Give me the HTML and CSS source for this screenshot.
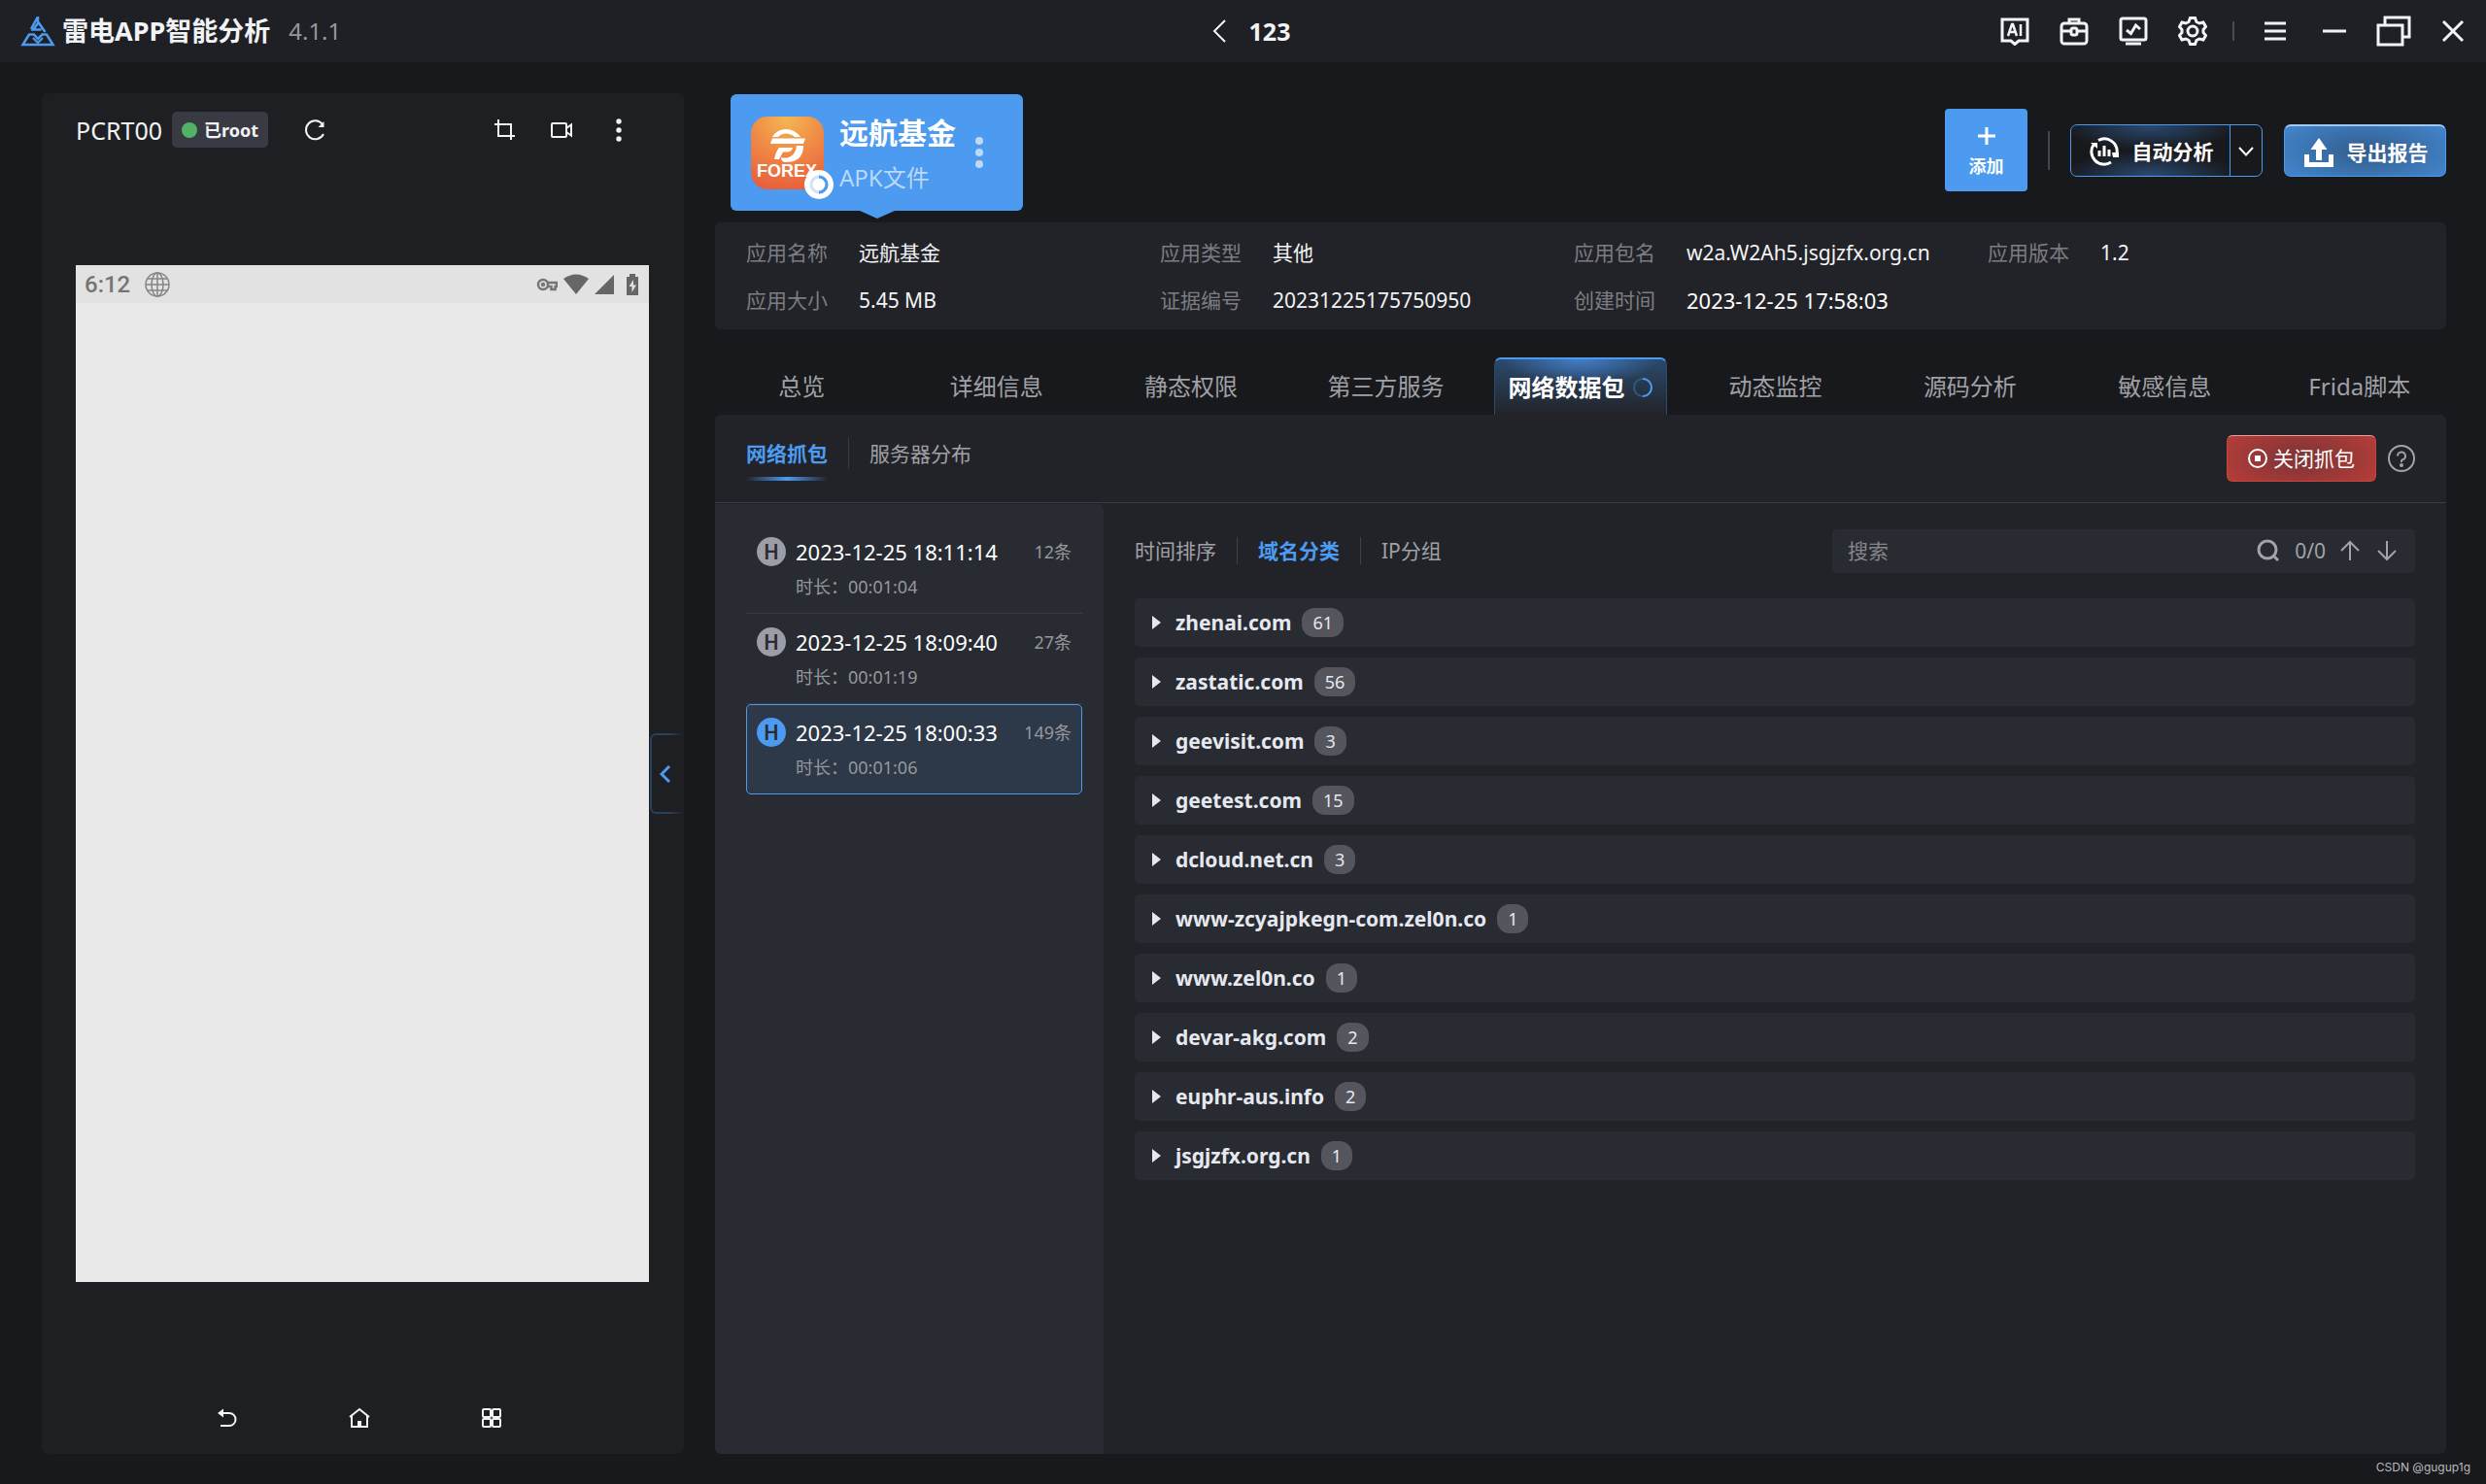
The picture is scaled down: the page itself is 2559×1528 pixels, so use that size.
FILE: index.html
```html
<!DOCTYPE html>
<html lang="zh-CN">
<head>
<meta charset="utf-8">
<meta name="viewport" content="width=device-width, initial-scale=1">
<title>雷电APP智能分析</title>
<link rel="stylesheet" href="styles.css">
</head>
<body>
<header class="titlebar">
  <div class="brand">
    <svg class="brand-logo" viewBox="0 0 36 32" fill="none" stroke="#4c9bf0"><path d="M18 1V8L13 14.500H21.500M18.500 7L25.500 17" stroke-width="2.500"/><path d="M17.500 2L11 14" stroke-width="2.500"/><path d="M9 19.500L2.500 30H33.500L27 19.500H22.500L18 24L14 19.500Z" stroke-width="2.500"/><path d="M13 23L18 28L23 23" stroke-width="2"/></svg>
    <h1 class="brand-name">雷电APP智能分析</h1>
    <span class="version">4.1.1</span>
  </div>
  <div class="case">
    <button class="icon-btn case-back" aria-label="返回"><svg width="14" height="24" viewBox="0 0 14 24"><path d="M13 1L2 12L13 23"/></svg></button>
    <strong class="case-name">123</strong>
  </div>
  <div class="tools">
    <button class="icon-btn tool" aria-label="AI"><svg width="30" height="30" viewBox="0 0 30 30"><path d="M2 3H28V25H19L15 28.500L11 25H2Z"/><path d="M8 20L12 8H13L17 20M9.500 16H15.500M21 8V20" stroke-width="2.500"/></svg></button>
    <button class="icon-btn tool" aria-label="工具箱"><svg width="30" height="30" viewBox="0 0 30 30"><rect x="2" y="7" width="26" height="21" rx="3"/><path d="M10 7V3H20V7M2 15H12M18 15H28"/><rect x="12" y="12" width="6" height="7" rx="2"/></svg></button>
    <button class="icon-btn tool" aria-label="检测"><svg width="30" height="30" viewBox="0 0 30 30"><rect x="2" y="2" width="26" height="22" rx="2"/><path d="M8 14L12.500 17.500L17.500 9L22 13M7 28H23"/></svg></button>
    <button class="icon-btn tool" aria-label="设置"><svg width="30" height="30" viewBox="0 0 30 30"><path d="M12.500 1.500H17.500L19 5.500L22 7L26 6L28.500 10.500L26 13.500V16.500L28.500 19.500L26 24L22 23L19 24.500L17.500 28.500H12.500L11 24.500L8 23L4 24L1.500 19.500L4 16.500V13.500L1.500 10.500L4 6L8 7L11 5.500Z"/><circle cx="15" cy="15" r="5"/></svg></button>
    <span class="tool-divider"></span>
    <button class="icon-btn tool" aria-label="菜单"><svg width="30" height="30" viewBox="0 0 30 30"><path d="M4 7H26M4 15H26M4 23H26"/></svg></button>
    <button class="icon-btn tool" aria-label="最小化"><svg width="30" height="30" viewBox="0 0 30 30"><path d="M3 15H27" stroke-width="3"/></svg></button>
    <button class="icon-btn tool" aria-label="还原"><svg width="36" height="32" viewBox="0 0 36 32"><path d="M9 10V2H34V22H27M2 10H27V30H2Z"/></svg></button>
    <button class="icon-btn tool" aria-label="关闭"><svg width="30" height="30" viewBox="0 0 30 30"><path d="M5 5L25 25M25 5L5 25" stroke-width="3"/></svg></button>
  </div>
</header>

<main class="workspace">
  <section class="device">
    <div class="device-bar">
      <span class="device-name">PCRT00</span>
      <span class="root-badge"><i class="root-dot"></i>已root</span>
      <button class="icon-btn device-reload" aria-label="刷新"><svg width="24" height="24" viewBox="0 0 24 24"><path d="M20 6A9.500 9.500 0 1 0 21 16"/><path d="M21.500 3V9H15.500Z" fill="#f2f3f5" stroke="none"/></svg></button>
      <div class="device-actions">
        <button class="icon-btn" aria-label="截屏"><svg width="24" height="24" viewBox="0 0 24 24"><path d="M6 1V18H23M2 6H19V22"/></svg></button>
        <button class="icon-btn" aria-label="录屏"><svg width="24" height="24" viewBox="0 0 24 24"><rect x="2" y="5" width="15" height="14" rx="1"/><path d="M17 10L22 6.500V17.500L17 14"/></svg></button>
        <button class="icon-btn" aria-label="更多"><svg width="24" height="24" viewBox="0 0 24 24" class="solid"><circle cx="12" cy="3" r="2.700"/><circle cx="12" cy="12" r="2.700"/><circle cx="12" cy="21" r="2.700"/></svg></button>
      </div>
    </div>
    <div class="stage">
      <div class="phone">
        <div class="phone-status">
          <span class="phone-time">6:12</span>
          <svg width="26" height="26" viewBox="0 0 26 26" fill="none" stroke="#858585" stroke-width="1.500"><circle cx="13" cy="13" r="12"/><ellipse cx="13" cy="13" rx="6" ry="12"/><path d="M13 1V25M1 13H25M3 7H23M3 19H23"/></svg>
          <span class="phone-icons">
            <svg width="22" height="16" viewBox="0 0 22 16" fill="none" stroke="#757575" stroke-width="2.500"><circle cx="7" cy="8" r="5"/><circle cx="7" cy="8" r="1"/><path d="M12 6H21V10H19.500V13H15.500V10H12"/></svg>
            <svg width="26" height="22" viewBox="0 0 26 22" fill="#666"><path d="M0 5Q13-4 26 5L13 21Z"/></svg>
            <svg width="20" height="20" viewBox="0 0 20 20" fill="#666"><path d="M20 0V20H0Z"/></svg>
            <svg class="phone-battery" width="14" height="22" viewBox="0 0 14 22"><path fill="#666" d="M4 0H10V3H13V22H1V3H4Z"/><path fill="#e2e2e2" d="M8 6L3.500 13H6.500V19L11 11.500H8Z"/></svg>
          </span>
        </div>
      </div>
    </div>
    <nav class="phone-nav" aria-label="设备导航">
      <button class="icon-btn" aria-label="返回键"><svg width="24" height="24" viewBox="0 0 24 24"><path d="M4 7H14A6.500 6.500 0 0 1 14 20H5"/><path d="M2 7L8 2.500V11.500Z" fill="#f2f3f5" stroke="none"/></svg></button>
      <button class="icon-btn" aria-label="主页键"><svg width="24" height="24" viewBox="0 0 24 24"><path d="M2 11L12 3L22 11M4 10V21H20V10M11 21V16H13V21"/></svg></button>
      <button class="icon-btn" aria-label="任务键"><svg width="24" height="24" viewBox="0 0 24 24"><rect x="3" y="3" width="8" height="8" rx="1"/><rect x="13" y="3" width="8" height="8" rx="1"/><rect x="3" y="13" width="8" height="8" rx="1"/><rect x="13" y="13" width="8" height="8" rx="1"/></svg></button>
    </nav>
    <button class="drawer-handle" aria-label="收起"><svg width="12" height="18" viewBox="0 0 12 18" fill="none" stroke="#4c9bf0" stroke-width="3"><path d="M10 1L2 9L10 17"/></svg></button>
  </section>

  <section class="analysis">
    <div class="top-row">
      <article class="app-card">
        <div class="app-icon">
          <svg width="75" height="75" viewBox="0 0 75 75"><defs><radialGradient id="forex" cx=".5" cy="0" r="1"><stop offset="0" stop-color="#f4b852"/><stop offset=".55" stop-color="#ef8645"/><stop offset="1" stop-color="#e9613b"/></radialGradient></defs><rect width="75" height="75" rx="17" fill="url(#forex)"/><path fill="#fff" d="M22 21Q27 13 36 13T51 21H45Q41 17.500 36 17.500T28 21ZM22 22.500H56L54 28H20ZM29 32H43Q42 36 38 36.500H33L29 44H24Q26 35 29 32ZM47 30H54Q54 47 36 47Q31 47 31 42Q36 44 41 41Q46 38 47 30Z"/><text x="6" y="62" fill="#fff" class="icon-word">FOREX</text></svg>
          <svg class="app-busy" width="30" height="30" viewBox="0 0 30 30" fill="none"><circle cx="15" cy="15" r="15" fill="#fff"/><circle cx="15" cy="15" r="8" stroke="#cfe3fb" stroke-width="3"/><path d="M15 7A8 8 0 0 1 15 23" stroke="#4c9bf0" stroke-width="3"/></svg>
        </div>
        <div class="app-text">
          <h2 class="app-name">远航基金</h2>
          <span class="app-kind">APK文件</span>
        </div>
        <button class="icon-btn app-more" aria-label="更多操作"><svg width="8" height="32" viewBox="0 0 8 32" class="solid"><circle cx="4" cy="4" r="4"/><circle cx="4" cy="16" r="4"/><circle cx="4" cy="28" r="4"/></svg></button>
      </article>
      <div class="actions">
        <button class="add-btn"><svg width="20" height="20" viewBox="0 0 20 20" fill="none" stroke="#fff" stroke-width="3"><path d="M10 1V19M1 10H19"/></svg>添加</button>
        <span class="action-divider"></span>
        <div class="split">
          <button class="auto-btn"><svg width="30" height="30" viewBox="0 0 30 30" fill="none" stroke="#fff" stroke-width="3"><path d="M9 3.500A13 13 0 0 1 28 17M22 26A13 13 0 0 1 4 8"/><path d="M1 6H8V12ZM23 16H30V21H24Z" fill="#fff" stroke="none"/><path d="M10 14V20M15 9V20M20 13V20"/></svg>自动分析</button>
          <button class="split-more" aria-label="更多分析方式"><svg width="16" height="10" viewBox="0 0 16 10" fill="none" stroke="#fff" stroke-width="2"><path d="M1 1L8 8.500L15 1"/></svg></button>
        </div>
        <button class="export-btn"><svg width="30" height="30" viewBox="0 0 30 30" fill="#fff"><path d="M15 0L23.500 12H18V23H12V12H6.500ZM0 17H5V25H25V17H30V30H0Z"/></svg>导出报告</button>
      </div>
    </div>

    <dl class="info">
      <div class="info-item"><dt>应用名称</dt><dd>远航基金</dd></div>
      <div class="info-item"><dt>应用类型</dt><dd>其他</dd></div>
      <div class="info-item"><dt>应用包名</dt><dd>w2a.W2Ah5.jsgjzfx.org.cn</dd></div>
      <div class="info-item"><dt>应用版本</dt><dd>1.2</dd></div>
      <div class="info-item"><dt>应用大小</dt><dd>5.45 MB</dd></div>
      <div class="info-item"><dt>证据编号</dt><dd>20231225175750950</dd></div>
      <div class="info-item"><dt>创建时间</dt><dd class="timestamp">2023-12-25 17:58:03</dd></div>
    </dl>

    <nav class="tabs">
      <button class="tab">总览</button>
      <button class="tab">详细信息</button>
      <button class="tab">静态权限</button>
      <button class="tab">第三方服务</button>
      <button class="tab tab-active">网络数据包<svg width="20" height="20" viewBox="0 0 20 20" fill="none" stroke-width="2"><circle cx="10" cy="10" r="9" stroke="#31577f"/><path d="M10 1A9 9 0 0 1 10 19" stroke="#4c9bf0"/></svg></button>
      <button class="tab">动态监控</button>
      <button class="tab">源码分析</button>
      <button class="tab">敏感信息</button>
      <button class="tab">Frida脚本</button>
    </nav>

    <div class="content">
      <div class="subbar">
        <div class="subtabs">
          <button class="subtab subtab-active">网络抓包</button>
          <span class="sub-divider"></span>
          <button class="subtab">服务器分布</button>
        </div>
        <button class="stop-btn"><svg width="20" height="20" viewBox="0 0 20 20" fill="none" stroke="#fff" stroke-width="2"><circle cx="10" cy="10" r="9"/><rect x="7" y="7" width="6" height="6" fill="#fff" stroke="none"/></svg>关闭抓包</button>
        <button class="icon-btn" aria-label="帮助"><svg width="28" height="28" viewBox="0 0 28 28" class="muted"><circle cx="14" cy="14" r="13"/><path d="M10 11.500A4 4 0 1 1 14.500 15.500Q14 16 14 18"/><circle cx="14" cy="21" r="1"/></svg></button>
      </div>
      <div class="split-pane">
        <ul class="captures">
          <li><button class="capture"><span class="proto">H</span><span class="timestamp">2023-12-25 18:11:14</span><span class="cap-count">12条</span><span class="cap-length">时长：00:01:04</span></button></li>
          <li><button class="capture"><span class="proto">H</span><span class="timestamp">2023-12-25 18:09:40</span><span class="cap-count">27条</span><span class="cap-length">时长：00:01:19</span></button></li>
          <li><button class="capture capture-active"><span class="proto">H</span><span class="timestamp">2023-12-25 18:00:33</span><span class="cap-count">149条</span><span class="cap-length">时长：00:01:06</span></button></li>
        </ul>
        <div class="packets">
          <div class="filters">
            <button class="filter">时间排序</button>
            <span class="filter-divider"></span>
            <button class="filter filter-active">域名分类</button>
            <span class="filter-divider"></span>
            <button class="filter">IP分组</button>
            <div class="search">
              <input class="search-input" type="text" placeholder="搜索" aria-label="搜索">
              <button class="icon-btn" aria-label="查找"><svg width="24" height="24" viewBox="0 0 24 24" class="muted thick"><circle cx="11" cy="11" r="9"/><path d="M17 17L22 22"/></svg></button>
              <span class="search-count">0/0</span>
              <button class="icon-btn" aria-label="上一个"><svg width="20" height="22" viewBox="0 0 20 22" class="muted"><path d="M10 21V2M1 11L10 2L19 11"/></svg></button>
              <button class="icon-btn search-next" aria-label="下一个"><svg width="20" height="22" viewBox="0 0 20 22" class="muted"><path d="M10 1V20M1 11L10 20L19 11"/></svg></button>
            </div>
          </div>
          <ul class="domains">
            <li><button class="domain">zhenai.com<span class="count">61</span></button></li>
            <li><button class="domain">zastatic.com<span class="count">56</span></button></li>
            <li><button class="domain">geevisit.com<span class="count">3</span></button></li>
            <li><button class="domain">geetest.com<span class="count">15</span></button></li>
            <li><button class="domain">dcloud.net.cn<span class="count">3</span></button></li>
            <li><button class="domain">www-zcyajpkegn-com.zel0n.co<span class="count">1</span></button></li>
            <li><button class="domain">www.zel0n.co<span class="count">1</span></button></li>
            <li><button class="domain">devar-akg.com<span class="count">2</span></button></li>
            <li><button class="domain">euphr-aus.info<span class="count">2</span></button></li>
            <li><button class="domain">jsgjzfx.org.cn<span class="count">1</span></button></li>
          </ul>
        </div>
      </div>
    </div>
  </section>
</main>
<footer class="watermark">CSDN @gugup1g</footer>
</body>
</html>
```
FILE: styles.css
```css
:root {
  --blue: #4c9bf0;
  --text: #f2f3f5;
  --muted: #96979c;
  --panel: #222328;
  --raised: #282b32;
}

* { box-sizing: border-box; }

body {
  margin: 0;
  min-height: 100vh;
  display: flex;
  flex-direction: column;
  background: #18191d;
  color: var(--text);
  font: 21px/30px "Noto Sans", "Noto Sans CJK SC", sans-serif;
}

h1, h2, dl, dd, ul { margin: 0; padding: 0; }
ul { list-style: none; }

button {
  margin: 0;
  padding: 0;
  border: 0;
  background: none;
  color: inherit;
  font: inherit;
  cursor: pointer;
}

svg { display: block; flex: none; }

.icon-btn { display: flex; flex: none; align-items: center; justify-content: center; }
.icon-btn svg { fill: none; stroke: var(--text); stroke-width: 2; }
.icon-btn svg.solid { fill: var(--text); stroke: none; }
.icon-btn svg.muted { stroke: #a2a3a7; }
.icon-btn svg.thick { stroke-width: 3; }

.timestamp { color: #fff; font-size: 22px; }

/* Title bar */
.titlebar {
  display: grid;
  grid-template-columns: 1fr auto 1fr;
  align-items: center;
  height: 64px;
  padding: 0 14px 0 21px;
  background: #1f2025;
}
.brand { display: flex; align-items: center; gap: 7px; }
.brand-logo { width: 36px; height: 32px; }
.brand-name { font-size: 27px; line-height: 40px; font-weight: 700; }
.version { margin-left: 12px; color: var(--muted); font-size: 24px; }
.case { display: flex; align-items: center; gap: 24px; padding-left: 10px; }
.case-name { font-size: 25px; }
.tools { display: flex; justify-content: flex-end; align-items: center; }
.tool { width: 61px; height: 40px; }
.tool.tool svg { stroke-width: 3; }
.tools .tool:last-child { width: 40px; margin-left: 11px; }
.tool-divider { width: 2px; height: 20px; margin: 0 11px; background: #4a4b50; }

.workspace {
  flex: 1;
  display: grid;
  grid-template-columns: 661fr 1782fr;
  gap: 32px;
  padding: 32px 41px 0 43px;
}

/* Mirrored device */
.device {
  position: relative;
  display: flex;
  flex-direction: column;
  padding: 19px 36px 25px 35px;
  border-radius: 6px;
  background: #1e1f23;
}
.device-bar { display: flex; align-items: center; height: 37px; }
.device-name { font-size: 25px; }
.root-badge {
  display: flex;
  align-items: center;
  gap: 7px;
  height: 37px;
  margin-left: 10px;
  padding: 0 10px;
  border-radius: 5px;
  background: #393b44;
  font-size: 18px;
  font-weight: 700;
}
.root-dot { width: 16px; height: 16px; border-radius: 50%; background: #52b266; }
.device-reload { margin-left: 36px; }
.device-actions { display: flex; gap: 35px; margin-left: auto; padding-right: 19px; }
.stage { flex: 1; display: flex; align-items: center; }
.phone { width: 100%; aspect-ratio: 590 / 1047; background: #e9e9e9; }
.phone-status {
  display: flex;
  align-items: center;
  gap: 15px;
  height: 39px;
  padding: 0 10px 0 9px;
  background: #e2e2e2;
  color: #757575;
}
.phone-time { font: 500 24px/30px Roboto, "Noto Sans", sans-serif; }
.phone-icons { display: flex; align-items: center; gap: 6px; margin-left: auto; }
.phone-battery { margin-left: 6px; }
.phone-nav { display: flex; justify-content: center; gap: 112px; padding: 7px 6px 0 0; }
.drawer-handle {
  position: absolute;
  top: 659px;
  right: 0;
  display: flex;
  align-items: center;
  width: 35px;
  height: 83px;
  padding-left: 8px;
  border: 2px solid #2a415c;
  border-right: 0;
  border-radius: 6px 0 0 6px;
  mask-image: linear-gradient(90deg, #000 60%, transparent);
}

/* App row */
.analysis { display: flex; flex-direction: column; min-width: 0; }
.top-row { display: flex; justify-content: space-between; margin-bottom: 12px; padding-left: 16px; }
.app-card {
  position: relative;
  display: flex;
  align-items: center;
  width: 301px;
  height: 120px;
  margin-top: 1px;
  padding: 0 41px 0 21px;
  border-radius: 6px;
  background: var(--blue);
}
.app-card::after {
  content: "";
  position: absolute;
  top: 100%;
  left: 50%;
  margin-left: -18px;
  border: 18px solid transparent;
  border-top: 8px solid var(--blue);
  border-bottom: 0;
}
.app-icon { position: relative; }
.icon-word { font: 700 18px "Liberation Sans", sans-serif; }
.app-busy { position: absolute; right: -10px; bottom: -10px; }
.app-text { margin-left: 16px; padding-top: 4px; white-space: nowrap; }
.app-name { font-size: 30px; line-height: 48px; font-weight: 700; color: #fff; }
.app-kind { display: block; font-size: 24px; line-height: 44px; color: #b9d8fa; }
.app-more { margin-left: auto; }
.app-more svg { opacity: .7; }

.actions { display: flex; align-items: center; margin-top: -4px; color: #fff; font-weight: 700; }
.add-btn {
  display: flex;
  flex-direction: column;
  align-items: center;
  gap: 6px;
  width: 85px;
  height: 85px;
  padding-top: 18px;
  border-radius: 4px;
  background: var(--blue);
  font-size: 18px;
}
.action-divider { width: 2px; height: 40px; margin: 0 21px; background: #44464b; }
.split {
  display: flex;
  width: 198px;
  height: 54px;
  margin-right: 22px;
  border: 1px solid var(--blue);
  border-radius: 7px;
}
.auto-btn {
  display: flex;
  flex: 1;
  align-items: center;
  justify-content: center;
  gap: 14px;
  padding: 3px 0 0 2px;
  background:
    radial-gradient(ellipse 90px 26px at 50% 0, #2a4a70, transparent),
    radial-gradient(ellipse 90px 26px at 50% 100%, #2a4a70, transparent);
}
.split-more {
  display: flex;
  align-items: center;
  justify-content: center;
  width: 33px;
  padding-top: 3px;
  border-left: 1px solid var(--blue);
}
.export-btn {
  display: flex;
  align-items: center;
  justify-content: center;
  gap: 14px;
  width: 167px;
  height: 54px;
  padding: 3px 0 0 2px;
  border: 1px solid var(--blue);
  border-top: 2px solid #9fc8f6;
  border-radius: 7px;
  background: radial-gradient(ellipse 100px 40px at center, #325c8a, #4284cb);
}

.info {
  display: grid;
  grid-template-columns: repeat(4, 1fr);
  align-content: start;
  row-gap: 19px;
  height: 110px;
  padding: 16px 46px 0 32px;
  border-radius: 6px;
  background: var(--panel);
}
.info-item { display: flex; gap: 32px; height: 30px; white-space: nowrap; }
.info-item dt { color: #7c7d82; }

/* Main tabs */
.tabs { display: grid; grid-template-columns: repeat(9, 1fr); gap: 22px; margin-top: 29px; }
.tab {
  display: flex;
  align-items: center;
  justify-content: center;
  height: 59px;
  color: #a0a1a6;
  font-size: 24px;
  white-space: nowrap;
}
.tab-active {
  gap: 9px;
  border: 1px solid #2b4a6d;
  border-top: 2px solid var(--blue);
  border-bottom: 0;
  border-radius: 7px 7px 0 0;
  background:
    radial-gradient(ellipse 80px 26px at 50% 0, #437dc6, transparent),
    linear-gradient(#2b4a6d, var(--panel));
  color: #fff;
  font-weight: 700;
}

.content {
  flex: 1;
  display: flex;
  flex-direction: column;
  border-radius: 6px;
  background: var(--panel);
  overflow: hidden;
}
.subbar {
  display: flex;
  align-items: center;
  height: 91px;
  padding: 0 32px;
  border-bottom: 1px solid #3a3b40;
}
.subtabs { display: flex; align-items: center; align-self: flex-start; padding-top: 12px; }
.subtab { height: 56px; color: #a0a1a6; }
.subtab-active {
  background: linear-gradient(90deg, transparent, var(--blue), transparent) bottom / 100% 4px no-repeat;
  color: var(--blue);
  font-weight: 700;
}
.sub-divider { width: 1px; height: 32px; margin: 0 21px; background: #3a3b40; }
.stop-btn {
  display: flex;
  align-items: center;
  justify-content: center;
  gap: 6px;
  width: 154px;
  height: 48px;
  margin: 0 12px 0 auto;
  border: 1px solid #c8433c;
  border-top-color: #e6a19d;
  border-radius: 6px;
  background: radial-gradient(ellipse 90px 40px at center, #7b3336, #b53d39);
  color: #fff;
}
.split-pane { flex: 1; display: grid; grid-template-columns: 400fr 1382fr; padding-top: 1px; }

/* Capture sessions */
.captures { padding: 20px 22px 0 32px; border-radius: 0 6px 0 0; background: var(--raised); }
.captures li { height: 93px; border-bottom: 1px solid #393b42; }
.captures li:last-child { border: 0; }
.capture {
  display: grid;
  grid-template-columns: 30px 1fr auto;
  grid-template-rows: 30px 30px;
  gap: 6px 10px;
  width: 100%;
  height: 100%;
  padding: 13px 10px;
  border: 1px solid transparent;
  text-align: left;
  white-space: nowrap;
}
.capture-active { border-color: var(--blue); border-radius: 5px; background: #2d3848; }
.proto {
  height: 30px;
  border-radius: 50%;
  background: #9c9da6;
  color: var(--raised);
  font-size: 21px;
  font-weight: 600;
  text-align: center;
}
.capture-active .proto { background: var(--blue); }
.cap-count { color: var(--muted); font-size: 18px; }
.cap-length { grid-column: 2 / -1; color: var(--muted); font-size: 18px; }

/* Packet groups */
.packets { min-width: 0; padding: 25px 32px 0; }
.filters { display: flex; align-items: center; height: 46px; margin-bottom: 26px; }
.filter { color: #a0a1a6; }
.filter-active { color: var(--blue); font-weight: 700; }
.filter-divider { width: 1px; height: 28px; margin: 0 21px; background: #404146; }
.search {
  display: flex;
  align-items: center;
  gap: 15px;
  width: 600px;
  height: 45px;
  margin-left: auto;
  padding: 0 19px 0 16px;
  border-radius: 4px;
  background: var(--raised);
}
.search-input {
  flex: 1;
  min-width: 0;
  padding: 0;
  border: 0;
  outline: 0;
  background: none;
  color: var(--text);
  font: inherit;
}
.search-input::placeholder { color: #85868b; opacity: 1; }
.search-count { color: #a2a3a7; }
.search-next { margin-left: 3px; }

.domains { display: grid; gap: 11px; }
.domain {
  display: flex;
  align-items: center;
  width: 100%;
  height: 50px;
  padding: 0 18px;
  border-radius: 5px;
  background: var(--raised);
  color: #e6e8ef;
  font-weight: 700;
}
.domain::before {
  content: "";
  margin-right: 15px;
  border: 7px solid transparent;
  border-left: 9px solid #e6e8ef;
  border-right: 0;
}
.count {
  min-width: 32px;
  height: 30px;
  margin-left: 11px;
  padding: 0 11px;
  border-radius: 13px;
  background: #54555d;
  font-size: 18px;
  font-weight: 400;
  text-align: center;
}

.watermark {
  height: 31px;
  padding-right: 16px;
  color: #b9babd;
  font: 12px/28px Inter, "Noto Sans", sans-serif;
  text-align: right;
}
```
